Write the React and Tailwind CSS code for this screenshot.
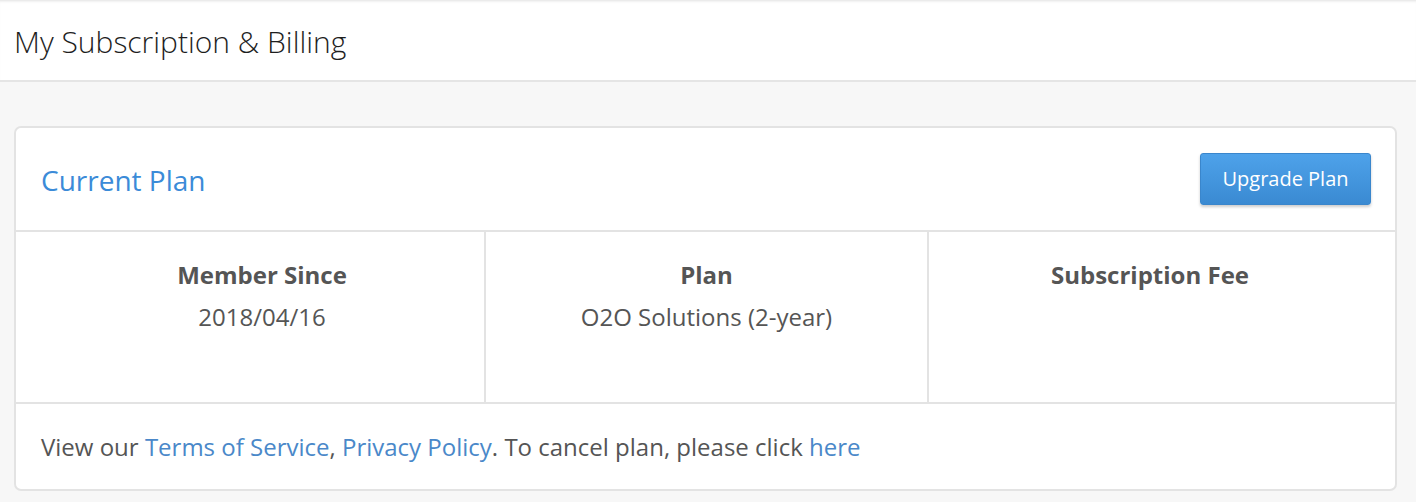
export default function App() {
  return (
    <div className="min-h-[502px] bg-[#f7f7f7] font-['Open_Sans',sans-serif]">
      {/* Page header */}
      <div className="h-[82px] bg-white border-b-2 border-[#e5e5e5] shadow-[inset_0_3px_3px_-2px_rgba(0,0,0,0.12)] flex items-center px-[14px]">
        <h1 className="text-[30px] text-[#1e1e1e] font-light mt-[3px]">My Subscription &amp; Billing</h1>
      </div>

      <div className="pl-[14px] pr-[19px] pt-[44px] pb-[12px]">
        <div className="bg-white border-2 border-[#e3e3e3] rounded-[7px]">
          {/* Card header */}
          <div className="h-[104px] flex items-center justify-between pl-[25px] pr-[24px] border-b-2 border-[#e3e3e3]">
            <h2 className="text-[28px] text-[#3b8bd8] font-normal mt-[2px]">Current Plan</h2>
            <button className="w-[171px] h-[52px] rounded-[3px] text-white text-[20px] bg-gradient-to-b from-[#4ea2ea] to-[#3a8ad2] border border-[#3a86cc] shadow-[0_2px_3px_rgba(0,0,0,0.2)]">
              Upgrade Plan
            </button>
          </div>

          {/* Details */}
          <div className="grid grid-cols-[470px_443px_1fr] h-[172px] border-b-2 border-[#e3e3e3]">
            <div className="flex flex-col items-center pt-[25px] pl-[24px] border-r-2 border-[#e3e3e3]">
              <div className="text-[24px] font-bold text-[#555]">Member Since</div>
              <div className="text-[24px] text-[#555] mt-[6px]">2018/04/16</div>
            </div>
            <div className="flex flex-col items-center pt-[25px] border-r-2 border-[#e3e3e3]">
              <div className="text-[24px] font-bold text-[#555]">Plan</div>
              <div className="text-[24px] text-[#555] mt-[6px]">O2O Solutions (2-year)</div>
            </div>
            <div className="flex flex-col items-center pt-[25px] pr-[24px]">
              <div className="text-[24px] font-bold text-[#555]">Subscription Fee</div>
            </div>
          </div>

          {/* Footer */}
          <div className="h-[85px] flex items-center px-[25px] text-[24px] text-[#555]">
            <p>
              View our <a className="text-[#4a88c9]">Terms of Service</a>,{' '}
              <a className="text-[#4a88c9]">Privacy Policy</a>. To cancel plan, please click{' '}
              <a className="text-[#4a88c9]">here</a>
            </p>
          </div>
        </div>
      </div>
    </div>
  )
}
